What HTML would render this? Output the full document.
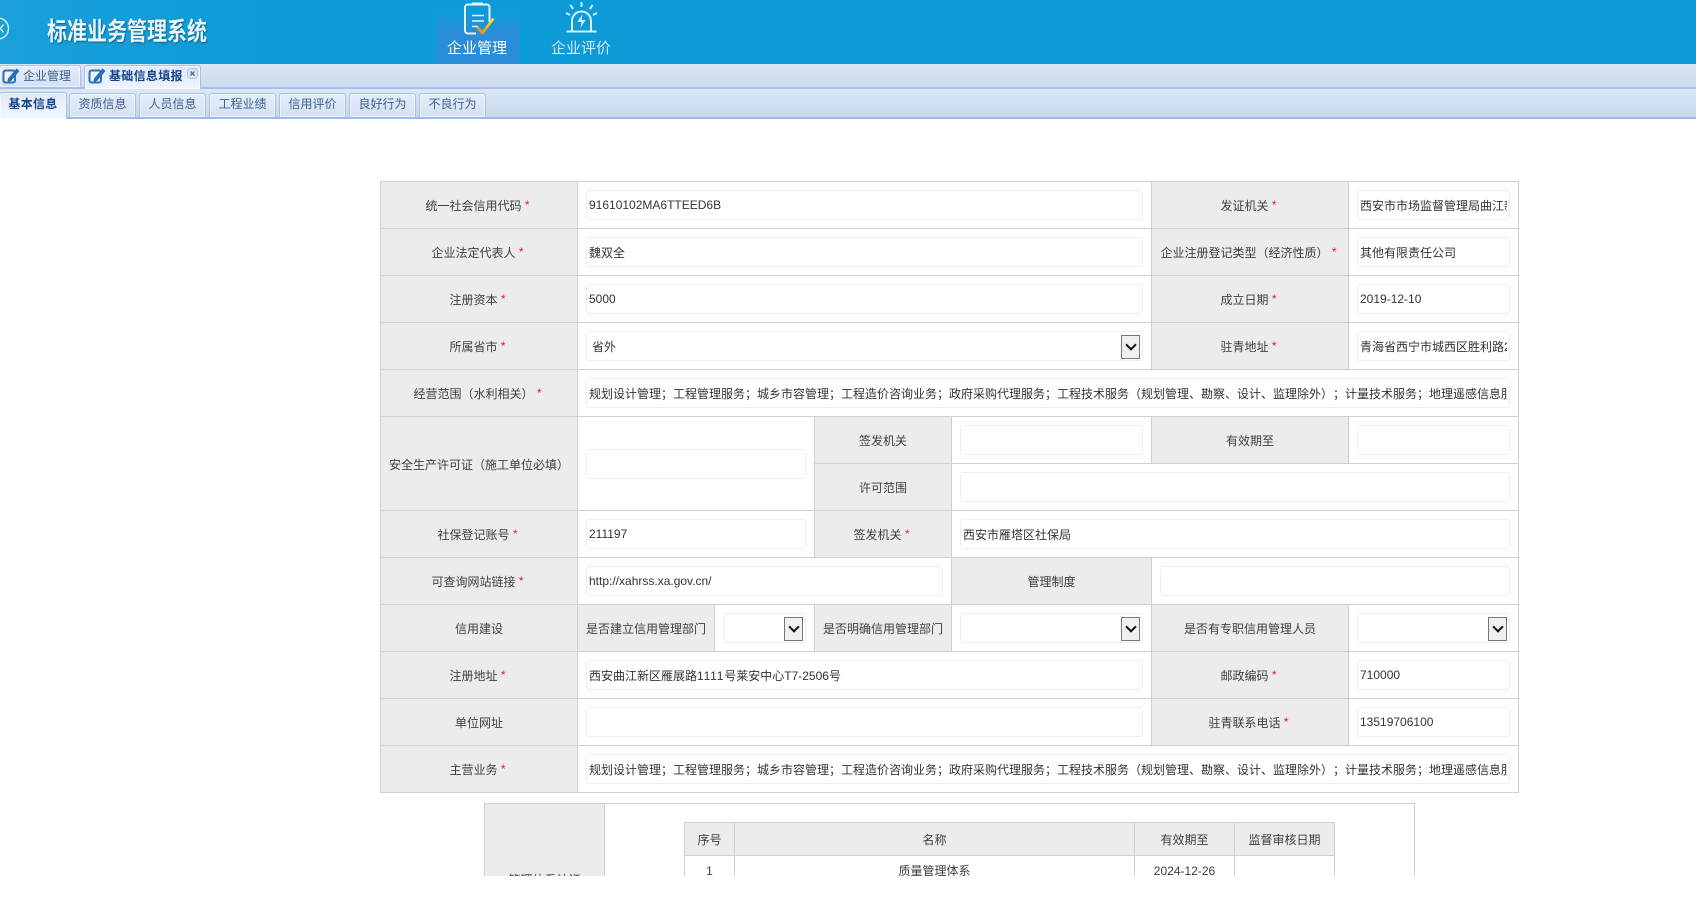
<!DOCTYPE html>
<html lang="zh"><head><meta charset="utf-8"><title>标准业务管理系统</title>
<style>
html,body{margin:0;padding:0;background:#fff;width:1696px;height:898px;overflow:hidden}
body{font:12px "Liberation Sans","Noto Sans CJK SC",sans-serif;color:#3e3e3e;position:relative;text-spacing-trim:space-all}
.clip{position:absolute;left:0;top:0;width:1696px;height:876px;overflow:hidden}
.hd{position:absolute;left:0;top:0;width:1696px;height:64px;background:#0d9bd8}
.hd .pat{position:absolute;left:0;top:0;width:260px;height:64px;background:linear-gradient(90deg,rgba(255,255,255,.05),rgba(255,255,255,0))}
.nav{position:absolute;left:436px;top:14px;width:83px;height:50px;background:linear-gradient(#0f9ad8,#2c8dd7 40%)}
.title{position:absolute;left:47px;top:14px;width:200px;font-size:25px;line-height:36px;color:#eaf5fb;font-weight:700;white-space:nowrap;transform:scaleX(.8);transform-origin:0 50%;text-shadow:1px 1px 2px rgba(0,50,90,.6)}
.nt{position:absolute;top:39px;font-size:15px;line-height:20px;white-space:nowrap}
.b1{position:absolute;left:0;top:64px;width:1696px;height:24px;background:linear-gradient(#dbe6f5,#cbdaee)}
.ln1{position:absolute;left:0;top:87px;width:1696px;height:2px;background:#a5c0e8}
.b2{position:absolute;left:0;top:89px;width:1696px;height:28px;background:linear-gradient(#dce7f7,#c7d7ee)}
.ln2{position:absolute;left:0;top:117px;width:1696px;height:2px;background:#9dbbe8}
.t{position:absolute;box-sizing:border-box;border:1px solid #a9c1e8;border-bottom:0;border-radius:3px 3px 0 0;background:linear-gradient(#e4edfa,#d3e1f4);color:#3f5e8c;white-space:nowrap;box-shadow:inset 0 0 0 1px rgba(255,255,255,.55)}
.t2{top:93px;width:67px;height:24px;line-height:21px;text-align:center}
.on{background:linear-gradient(#dfeafa,#f3f8fe);color:#15428b;font-weight:700;letter-spacing:.3px}
.c{position:absolute;box-sizing:border-box;border:1px solid #d0d0d4;height:48px;background:#fff}
.l{background:#ececec;display:flex;align-items:center;justify-content:center;white-space:pre;color:#3e3e3e}
.l i{font-style:normal;color:#f0103a;margin-right:3px}
.v{padding:8px}
.i{box-sizing:border-box;position:relative;height:30px;border:1px solid #eeeeee;border-radius:3px;padding:0 2px;line-height:30px;color:#333;background:#fff}
.i span{display:block;overflow:hidden;white-space:nowrap;height:28px}
.i span.n{line-height:28px}
.s span{padding-left:3px}
.a{position:absolute;right:2px;top:3px;box-sizing:border-box;width:19px;height:24px;border:1px solid #777;background:#f0f0f0}
.a:after{content:"";position:absolute;left:4.500px;top:5px;width:6px;height:6px;border-right:2px solid #111;border-bottom:2px solid #111;transform:rotate(45deg)}
.ct{text-align:center;line-height:34px;overflow:hidden;border-bottom:0}
</style></head><body>
<div class="clip">
<div class="hd"><div class="pat"></div><div class="nav"></div>
<svg style="position:absolute;left:0;top:0" width="14" height="64"><circle cx="-2" cy="28.500" r="10.500" fill="none" stroke="#dff1fa" stroke-width="1.400"/><path d="M-3 24.500l6.500 8M3.500 24.500L-3 32.500" stroke="#dff1fa" stroke-width="1.400" fill="none"/></svg>
<div class="title">标准业务管理系统</div>
<svg style="position:absolute;left:460px;top:0" width="40" height="38" viewBox="460 0 40 38"><defs><linearGradient id="ck" x1="0" y1="1" x2="1" y2="0"><stop offset="0" stop-color="#f09000"/><stop offset="1" stop-color="#fde030"/></linearGradient></defs>
<path d="M476 33.500H468a3 3 0 0 1-3-3V7.500a3 3 0 0 1 3-3H487a2.500 2.500 0 0 1 2.500 2.500V22" fill="none" stroke="#e6f4fa" stroke-width="2"/>
<path d="M472 4h11" stroke="#e6f4fa" stroke-width="3"/>
<path d="M472 15.500h12M472 21h12M472 26.500h6" stroke="#e6f4fa" stroke-width="1.600" fill="none"/>
<path d="M477.500 27.500l5 5.500L493.500 18.500" fill="none" stroke="url(#ck)" stroke-width="2.600"/></svg>
<div class="nt" style="left:447px;color:#fff">企业管理</div>
<svg style="position:absolute;left:562px;top:0" width="40" height="36" viewBox="562 0 40 36">
<path d="M566.500 31.500h30" stroke="#d9eff8" stroke-width="2"/>
<path d="M572 31V21a9.500 9.500 0 0 1 19 0v10" fill="none" stroke="#d9eff8" stroke-width="2"/>
<path d="M582.500 14l-5 8h4l-1 6 5-8h-4z" fill="#d9eff8"/>
<path d="M581.500 2v5M570.500 5l2.500 4M592.500 5l-2.500 4M566 13l4 2M597 13l-4 2" stroke="#d9eff8" stroke-width="2" fill="none"/></svg>
<div class="nt" style="left:551px;color:#cfe9f5">企业评价</div>
</div>

<div class="b1"></div><div class="ln1"></div><div class="b2"></div><div class="ln2"></div>

<div class="t" style="left:-1px;top:65px;width:82px;height:22px;line-height:20px;padding-left:23px">企业管理</div>
<div class="t on" style="left:84px;top:65px;width:117px;height:24px;line-height:20px;padding-left:24px;border-bottom:0;background:linear-gradient(#dfeafa,#eef4fd)">基础信息填报</div>
<svg style="position:absolute;left:2px;top:67px" width="18" height="17" viewBox="0 0 18 17"><rect x="1.500" y="3.500" width="11.500" height="12" rx="2" fill="#eef4fc" stroke="#2f70b6" stroke-width="2"/><path d="M6 11.500l8.500-10 3 2.500-8.500 10-3.500 1z" fill="#2a6cb5"/></svg>
<svg style="position:absolute;left:88px;top:67px" width="18" height="17" viewBox="0 0 18 17"><rect x="1.500" y="3.500" width="11.500" height="12" rx="2" fill="#eef4fc" stroke="#2f70b6" stroke-width="2"/><path d="M6 11.500l8.500-10 3 2.500-8.500 10-3.500 1z" fill="#2a6cb5"/></svg>
<svg style="position:absolute;left:187px;top:68px" width="11" height="11" viewBox="0 0 11 11"><rect x=".5" y=".5" width="10" height="10" rx="3" fill="#dbe6f5" stroke="#b4c6e0"/><path d="M3.500 3.500l4 4M7.500 3.500l-4 4" stroke="#5a6f92" stroke-width="1.500"/></svg>

<div class="t t2 on" style="left:-1px;top:92px;width:68px;height:27px;line-height:23px">基本信息</div>
<div class="t t2" style="left:69px">资质信息</div>
<div class="t t2" style="left:139px">人员信息</div>
<div class="t t2" style="left:209px">工程业绩</div>
<div class="t t2" style="left:279px">信用评价</div>
<div class="t t2" style="left:349px">良好行为</div>
<div class="t t2" style="left:419px">不良行为</div>

<!-- row 1 -->
<div class="c l" style="left:380px;top:181px;width:198px">统一社会信用代码 <i>*</i></div>
<div class="c v" style="left:577px;top:181px;width:575px"><div class="i"><span class="n">91610102MA6TTEED6B</span></div></div>
<div class="c l" style="left:1151px;top:181px;width:198px">发证机关 <i>*</i></div>
<div class="c v" style="left:1348px;top:181px;width:171px"><div class="i"><span>西安市市场监督管理局曲江新区分局</span></div></div>
<!-- row 2 -->
<div class="c l" style="left:380px;top:228px;width:198px">企业法定代表人 <i>*</i></div>
<div class="c v" style="left:577px;top:228px;width:575px"><div class="i"><span>魏双全</span></div></div>
<div class="c l" style="left:1151px;top:228px;width:198px">企业注册登记类型（经济性质） <i>*</i></div>
<div class="c v" style="left:1348px;top:228px;width:171px"><div class="i"><span>其他有限责任公司</span></div></div>
<!-- row 3 -->
<div class="c l" style="left:380px;top:275px;width:198px">注册资本 <i>*</i></div>
<div class="c v" style="left:577px;top:275px;width:575px"><div class="i"><span class="n">5000</span></div></div>
<div class="c l" style="left:1151px;top:275px;width:198px">成立日期 <i>*</i></div>
<div class="c v" style="left:1348px;top:275px;width:171px"><div class="i"><span class="n">2019-12-10</span></div></div>
<!-- row 4 -->
<div class="c l" style="left:380px;top:322px;width:198px">所属省市 <i>*</i></div>
<div class="c v" style="left:577px;top:322px;width:575px"><div class="i s"><span>省外</span><div class="a"></div></div></div>
<div class="c l" style="left:1151px;top:322px;width:198px">驻青地址 <i>*</i></div>
<div class="c v" style="left:1348px;top:322px;width:171px"><div class="i"><span>青海省西宁市城西区胜利路2号</span></div></div>
<!-- row 5 -->
<div class="c l" style="left:380px;top:369px;width:198px">经营范围（水利相关） <i>*</i></div>
<div class="c v" style="left:577px;top:369px;width:942px"><div class="i"><span>规划设计管理；工程管理服务；城乡市容管理；工程造价咨询业务；政府采购代理服务；工程技术服务（规划管理、勘察、设计、监理除外）；计量技术服务；地理遥感信息服务</span></div></div>
<!-- row 6-7 -->
<div class="c l" style="left:380px;top:416px;width:198px;height:95px;padding-top:2px">安全生产许可证（施工单位必填）</div>
<div class="c v" style="left:577px;top:416px;width:238px;height:95px;padding-top:32px"><div class="i"><span></span></div></div>
<div class="c l" style="left:814px;top:416px;width:138px">签发机关</div>
<div class="c v" style="left:951px;top:416px;width:201px"><div class="i"><span></span></div></div>
<div class="c l" style="left:1151px;top:416px;width:198px">有效期至</div>
<div class="c v" style="left:1348px;top:416px;width:171px"><div class="i"><span></span></div></div>
<div class="c l" style="left:814px;top:463px;width:138px">许可范围</div>
<div class="c v" style="left:951px;top:463px;width:568px"><div class="i"><span></span></div></div>
<!-- row 8 -->
<div class="c l" style="left:380px;top:510px;width:198px">社保登记账号 <i>*</i></div>
<div class="c v" style="left:577px;top:510px;width:238px"><div class="i"><span class="n">211197</span></div></div>
<div class="c l" style="left:814px;top:510px;width:138px">签发机关 <i>*</i></div>
<div class="c v" style="left:951px;top:510px;width:568px"><div class="i"><span>西安市雁塔区社保局</span></div></div>
<!-- row 9 -->
<div class="c l" style="left:380px;top:557px;width:198px">可查询网站链接 <i>*</i></div>
<div class="c v" style="left:577px;top:557px;width:375px"><div class="i"><span class="n">http://xahrss.xa.gov.cn/</span></div></div>
<div class="c l" style="left:951px;top:557px;width:201px">管理制度</div>
<div class="c v" style="left:1151px;top:557px;width:368px"><div class="i"><span></span></div></div>
<!-- row 10 -->
<div class="c l" style="left:380px;top:604px;width:198px">信用建设</div>
<div class="c l" style="left:577px;top:604px;width:138px">是否建立信用管理部门</div>
<div class="c v" style="left:714px;top:604px;width:101px"><div class="i s"><span></span><div class="a"></div></div></div>
<div class="c l" style="left:814px;top:604px;width:138px">是否明确信用管理部门</div>
<div class="c v" style="left:951px;top:604px;width:201px"><div class="i s"><span></span><div class="a"></div></div></div>
<div class="c l" style="left:1151px;top:604px;width:198px">是否有专职信用管理人员</div>
<div class="c v" style="left:1348px;top:604px;width:171px"><div class="i s"><span></span><div class="a"></div></div></div>
<!-- row 11 -->
<div class="c l" style="left:380px;top:651px;width:198px">注册地址 <i>*</i></div>
<div class="c v" style="left:577px;top:651px;width:575px"><div class="i"><span>西安曲江新区雁展路<b style="font-weight:400;letter-spacing:.8px">1111</b>号莱安中心T7-2506号</span></div></div>
<div class="c l" style="left:1151px;top:651px;width:198px">邮政编码 <i>*</i></div>
<div class="c v" style="left:1348px;top:651px;width:171px"><div class="i"><span class="n">710000</span></div></div>
<!-- row 12 -->
<div class="c l" style="left:380px;top:698px;width:198px">单位网址</div>
<div class="c v" style="left:577px;top:698px;width:575px"><div class="i"><span></span></div></div>
<div class="c l" style="left:1151px;top:698px;width:198px">驻青联系电话 <i>*</i></div>
<div class="c v" style="left:1348px;top:698px;width:171px"><div class="i"><span class="n">13519706100</span></div></div>
<!-- row 13 -->
<div class="c l" style="left:380px;top:745px;width:198px">主营业务 <i>*</i></div>
<div class="c v" style="left:577px;top:745px;width:942px"><div class="i"><span>规划设计管理；工程管理服务；城乡市容管理；工程造价咨询业务；政府采购代理服务；工程技术服务（规划管理、勘察、设计、监理除外）；计量技术服务；地理遥感信息服务</span></div></div>

<!-- second table (clipped at 876 by the page viewport) -->
<div class="c" style="left:484px;top:803px;width:931px;height:73px;border-bottom:0"></div>
<div class="c l" style="left:484px;top:803px;width:121px;height:73px;border-bottom:0;align-items:flex-start;padding-top:67px;overflow:hidden">管理体系认证</div>
<div class="c l ct" style="display:block;left:684px;top:822px;width:51px;height:34px;border-bottom:1px solid #d0d0d4">序号</div>
<div class="c l ct" style="display:block;left:734px;top:822px;width:401px;height:34px;border-bottom:1px solid #d0d0d4">名称</div>
<div class="c l ct" style="display:block;left:1134px;top:822px;width:101px;height:34px;border-bottom:1px solid #d0d0d4">有效期至</div>
<div class="c l ct" style="display:block;left:1234px;top:822px;width:101px;height:34px;border-bottom:1px solid #d0d0d4">监督审核日期</div>
<div class="c ct" style="left:684px;top:855px;width:51px;height:21px;line-height:31px">1</div>
<div class="c ct" style="left:734px;top:855px;width:401px;height:21px;line-height:31px">质量管理体系</div>
<div class="c ct" style="left:1134px;top:855px;width:101px;height:21px;line-height:31px">2024-12-26</div>
<div class="c ct" style="left:1234px;top:855px;width:101px;height:21px"></div>
</div>
</body></html>
